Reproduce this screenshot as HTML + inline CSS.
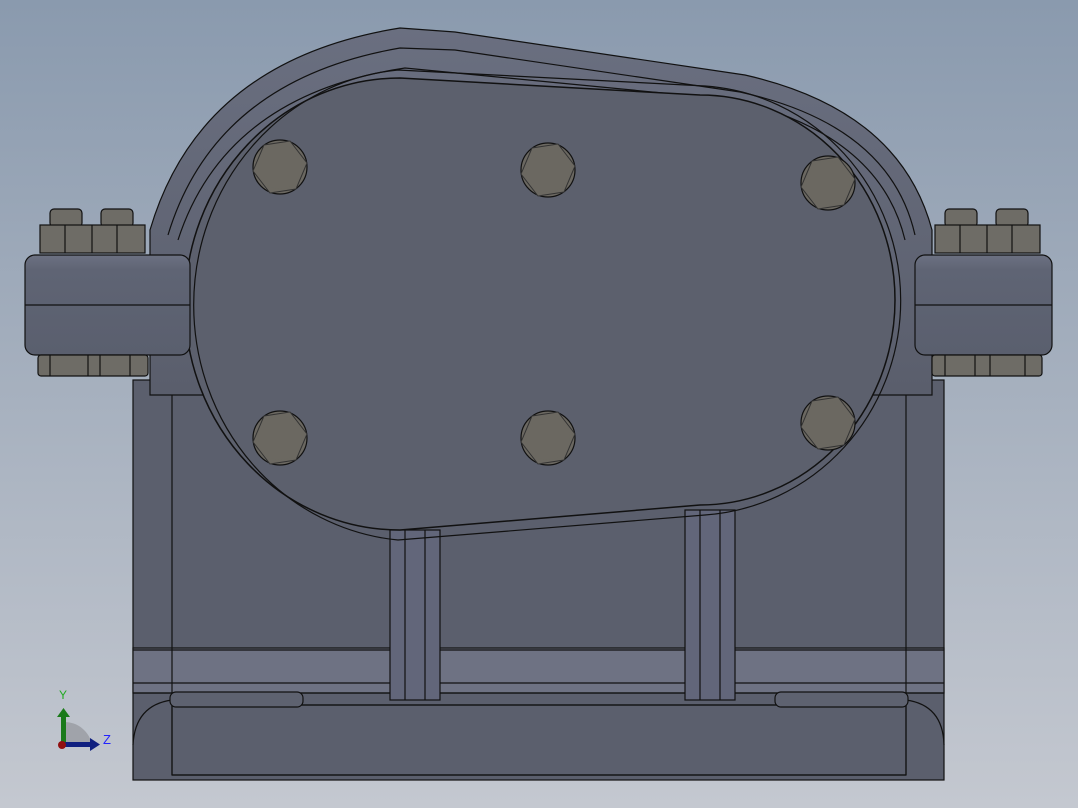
<!DOCTYPE html>
<html><head><style>
html,body{margin:0;padding:0;width:1078px;height:808px;overflow:hidden}
body{background:linear-gradient(#8a9aae,#c4c8d0)}
svg{position:absolute;left:0;top:0}
</style></head><body>
<svg width="1078" height="808" viewBox="0 0 1078 808" xmlns="http://www.w3.org/2000/svg">
<defs>
<linearGradient id="dome" x1="0" y1="0" x2="0" y2="1"><stop offset="0" stop-color="#6a6f80"/><stop offset="1" stop-color="#5a5e6c"/></linearGradient>
<linearGradient id="fl" x1="0" y1="0" x2="0" y2="1"><stop offset="0" stop-color="#6c7182"/><stop offset=".15" stop-color="#5f6474"/><stop offset="1" stop-color="#5a5f6e"/></linearGradient>
<g id="bolt"><circle r="27" fill="#6b6861" stroke="#111" stroke-width="1.2"/><polygon points="27,-4 16,22 -10,26 -27,4 -16,-22 10,-26" fill="#6b6861" stroke="#333" stroke-width="1"/><circle r="22" fill="#6b6861"/></g>
</defs>
<g stroke="#111" stroke-width="1.2" fill="none">
<rect x="133" y="380" width="811" height="400" fill="#5b5f6d"/>
<rect x="133" y="648" width="811" height="45" fill="#6e7283"/>
<rect x="172" y="705" width="734" height="70" fill="#5b5f6d"/>
<line x1="172" y1="380" x2="172" y2="775"/><line x1="906" y1="380" x2="906" y2="775"/>
<line x1="133" y1="650" x2="944" y2="650"/><line x1="133" y1="683" x2="944" y2="683"/>
<line x1="133" y1="693" x2="944" y2="693"/><line x1="172" y1="705" x2="906" y2="705"/>
<line x1="172" y1="775" x2="906" y2="775"/>
<path d="M133 745 Q135 705 172 700 M906 700 Q943 705 944 745"/>
<rect x="170" y="692" width="133" height="15" rx="6" fill="#5e6270"/>
<rect x="775" y="692" width="133" height="15" rx="6" fill="#5e6270"/>
<path d="M150 230 Q200 60 400 28 L455 32 L745 75 Q900 110 932 230 L932 395 L150 395 Z" fill="url(#dome)"/>
<path d="M168 235 Q215 80 400 48 L455 50 L740 92 Q890 125 915 235"/>
<path d="M178 240 Q225 95 405 68 L735 100 Q880 135 905 240"/>
<rect x="390" y="530" width="50" height="170" fill="#62667a"/>
<line x1="405" y1="530" x2="405" y2="700"/><line x1="425" y1="530" x2="425" y2="700"/>
<rect x="685" y="510" width="50" height="190" fill="#62667a"/>
<line x1="700" y1="510" x2="700" y2="700"/><line x1="720" y1="510" x2="720" y2="700"/>
<path d="M400 78 L700 95 A195 205 0 0 1 700 505 L400 530 A215 226 0 0 1 400 78 Z" fill="#5c606d" stroke-width="1.5"/>
<path d="M398 70 L705 86 A210 215 0 0 1 705 515 L398 540 A225 236 0 0 1 398 70 Z"/>
<rect x="25" y="255" width="165" height="100" rx="10" fill="url(#fl)"/>
<line x1="25" y1="305" x2="190" y2="305"/>
<rect x="915" y="255" width="137" height="100" rx="10" fill="url(#fl)"/>
<line x1="915" y1="305" x2="1052" y2="305"/>
<g fill="#6e6c66">
<rect x="50" y="209" width="32" height="18" rx="4"/><rect x="101" y="209" width="32" height="18" rx="4"/>
<rect x="40" y="225" width="105" height="28"/>
<rect x="945" y="209" width="32" height="18" rx="4"/><rect x="996" y="209" width="32" height="18" rx="4"/>
<rect x="935" y="225" width="105" height="28"/>
<rect x="38" y="355" width="110" height="21" rx="3"/>
<rect x="932" y="355" width="110" height="21" rx="3"/>
</g>
<path d="M65 225V253M92 225V253M117 225V253M960 225V253M987 225V253M1012 225V253M50 355V376M88 355V376M100 355V376M130 355V376M945 355V376M975 355V376M990 355V376M1025 355V376"/>
</g>
<use href="#bolt" x="280" y="167"/><use href="#bolt" x="548" y="170"/><use href="#bolt" x="828" y="183"/>
<use href="#bolt" x="280" y="438"/><use href="#bolt" x="548" y="438"/><use href="#bolt" x="828" y="423"/>
<path d="M64 745 L64 722 A28 28 0 0 1 92 745 Z" fill="#a0a3aa"/>
<rect x="61" y="715" width="5" height="30" fill="#1a7a1a"/>
<path d="M57 717 L63.5 708 L70 717Z" fill="#1a7a1a"/>
<rect x="62" y="742" width="30" height="5" fill="#102080"/>
<path d="M90 738 L100 744.5 L90 751Z" fill="#102080"/>
<circle cx="62" cy="745" r="4" fill="#901010"/>
<text x="59" y="699" font-family="Liberation Sans,sans-serif" font-size="12" fill="#2a2">Y</text>
<text x="103" y="744" font-family="Liberation Sans,sans-serif" font-size="13" fill="#22f">Z</text>
</svg>
</body></html>
